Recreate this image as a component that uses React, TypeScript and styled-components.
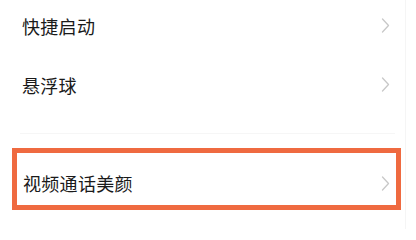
import React from "react";
import styled, { createGlobalStyle } from "styled-components";

const Global = createGlobalStyle`
  html, body {
    margin: 0;
    padding: 0;
    background: #ffffff;
  }
  body {
    font-family: "Noto Sans CJK SC", "Noto Sans", sans-serif;
    overflow: hidden;
  }
`;

const Page = styled.div`
  width: 405px;
  height: 229px;
  border-right: 1px solid #f5f5f5;
  overflow: hidden;
`;

const Group = styled.div`
  margin-top: -4px;
`;

const Row = styled.div<{ $boxed?: boolean }>`
  display: flex;
  align-items: center;
  justify-content: space-between;
  height: ${(p) => (p.$boxed ? "44px" : "59px")};
  padding: ${(p) => (p.$boxed ? "8px 6px 0 6px" : "0 15px 0 22px")};
`;

const Label = styled.span`
  font-size: 18px;
  line-height: 1;
  color: #1a1a1a;
  letter-spacing: 0.3px;
`;

const Divider = styled.div`
  height: 1px;
  background: #f6f6f6;
  margin: 19px 10px 14px 20px;
`;

const Highlight = styled.div`
  margin: 0 4px 0 12px;
  border: 5px solid #ef6a40;
  height: 52px;
`;

const Chevron = () => (
  <svg width="9" height="15" viewBox="0 0 9 15" fill="none">
    <polyline
      points="1.5,1 7.5,7.5 1.5,14"
      stroke="#c8c8c8"
      strokeWidth="1.3"
      strokeLinecap="round"
      strokeLinejoin="round"
    />
  </svg>
);

const items = ["快捷启动", "悬浮球"];

export default () => {
  return (
    <Page>
      <Global />
      <Group>
        {items.map((item) => {
          return (
            <Row key={item}>
              <Label>{item}</Label>
              <Chevron />
            </Row>
          );
        })}
      </Group>
      <Divider />
      <Highlight>
        <Row $boxed>
          <Label>视频通话美颜</Label>
          <Chevron />
        </Row>
      </Highlight>
    </Page>
  );
};
